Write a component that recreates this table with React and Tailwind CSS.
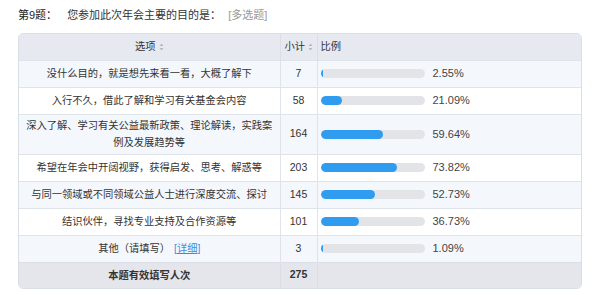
import React from "react";

const rows = [
  { label: ["没什么目的，就是想先来看一看，大概了解下"], count: 7, pct: 2.55 },
  { label: ["入行不久，借此了解和学习有关基金会内容"], count: 58, pct: 21.09 },
  {
    label: ["深入了解、学习有关公益最新政策、理论解读，实践案", "例及发展趋势等"],
    count: 164,
    pct: 59.64,
  },
  { label: ["希望在年会中开阔视野，获得启发、思考、解惑等"], count: 203, pct: 73.82 },
  { label: ["与同一领域或不同领域公益人士进行深度交流、探讨"], count: 145, pct: 52.73 },
  { label: ["结识伙伴，寻找专业支持及合作资源等"], count: 101, pct: 36.73 },
  { label: ["其他（请填写）"], count: 3, pct: 1.09, detail: true },
];

const SortIcon = () => (
  <svg width="5" height="8" viewBox="0 0 5 8" className="inline-block ml-[3px] align-middle">
    <path d="M2.5 0.5 L4.5 3 L0.5 3 Z" fill="#b4b8c2" />
    <path d="M2.5 7.5 L4.5 5 L0.5 5 Z" fill="#b4b8c2" />
  </svg>
);

const Bar = ({ pct }) => (
  <div className="flex items-center">
    <div className="w-[104px] h-[9px] rounded-full bg-[#e3e4e8] overflow-hidden">
      <div
        className="h-full rounded-full bg-[#2f9cf0]"
        style={{ width: `${Math.max((pct * 104) / 100, 2.5)}px` }}
      />
    </div>
    <span className="ml-[8px] text-[11px] text-[#444]">{pct.toFixed(2)}%</span>
  </div>
);

export default function App() {
  return (
    <div
      className="w-[600px] h-[295px] bg-white text-[#333] overflow-hidden"
      style={{ fontFamily: '"Liberation Sans", "Noto Sans CJK SC", sans-serif' }}
    >
      {/* Title */}
      <div className="flex items-center h-[33px] px-[18px] pb-[2px] text-[11px]">
        <span className="text-[#222]">第9题：</span>
        <span className="ml-[10px] text-[#333]">您参加此次年会主要的目的是：</span>
        <span className="ml-[7px] text-[#999]">[多选题]</span>
      </div>

      {/* Table */}
      <div className="mx-[18px] w-[564px] rounded-[5px] border border-[#dadee6] overflow-hidden">
        <table className="w-full border-collapse text-[10.25px] table-fixed">
          <colgroup>
            <col className="w-[261px]" />
            <col className="w-[37px]" />
            <col />
          </colgroup>
          <thead>
            <tr className="bg-[#e6e9f0] h-[26px]">
              <th className="font-normal text-center border-r border-[#dadee6]">
                选项<SortIcon />
              </th>
              <th className="font-normal text-left pl-[4px] border-r border-[#dadee6]">
                小计<SortIcon />
              </th>
              <th className="font-normal text-left pl-[3px]">比例</th>
            </tr>
          </thead>
          <tbody>
            {rows.map((r, i) => (
              <tr
                key={i}
                className={`${i % 2 === 0 ? "bg-[#f4f7fc]" : "bg-white"} border-t border-[#dfe3ea]`}
              >
                <td
                  className={`text-center px-[2px] whitespace-nowrap border-r border-[#dfe3ea] leading-[17px] ${
                    r.label.length > 1 ? "h-[40px]" : "h-[27px]"
                  }`}
                >
                  {r.label.map((line, j) => (
                    <div key={j}>
                      {line}
                      {r.detail && (
                        <span className="ml-[4px] text-[#3a8ee0]">
                          [<span className="underline">详细</span>]
                        </span>
                      )}
                    </div>
                  ))}
                </td>
                <td className="text-center text-[10.5px] border-r border-[#dfe3ea]">{r.count}</td>
                <td className="pl-[3px]">
                  <Bar pct={r.pct} />
                </td>
              </tr>
            ))}
            <tr className="bg-[#e4e6ec] h-[26px] border-t border-[#dadee6]">
              <td className="text-center font-bold border-r border-[#dadee6]">本题有效填写人次</td>
              <td className="text-center font-bold text-[10.5px] border-r border-[#dadee6]">275</td>
              <td />
            </tr>
          </tbody>
        </table>
      </div>
    </div>
  );
}
